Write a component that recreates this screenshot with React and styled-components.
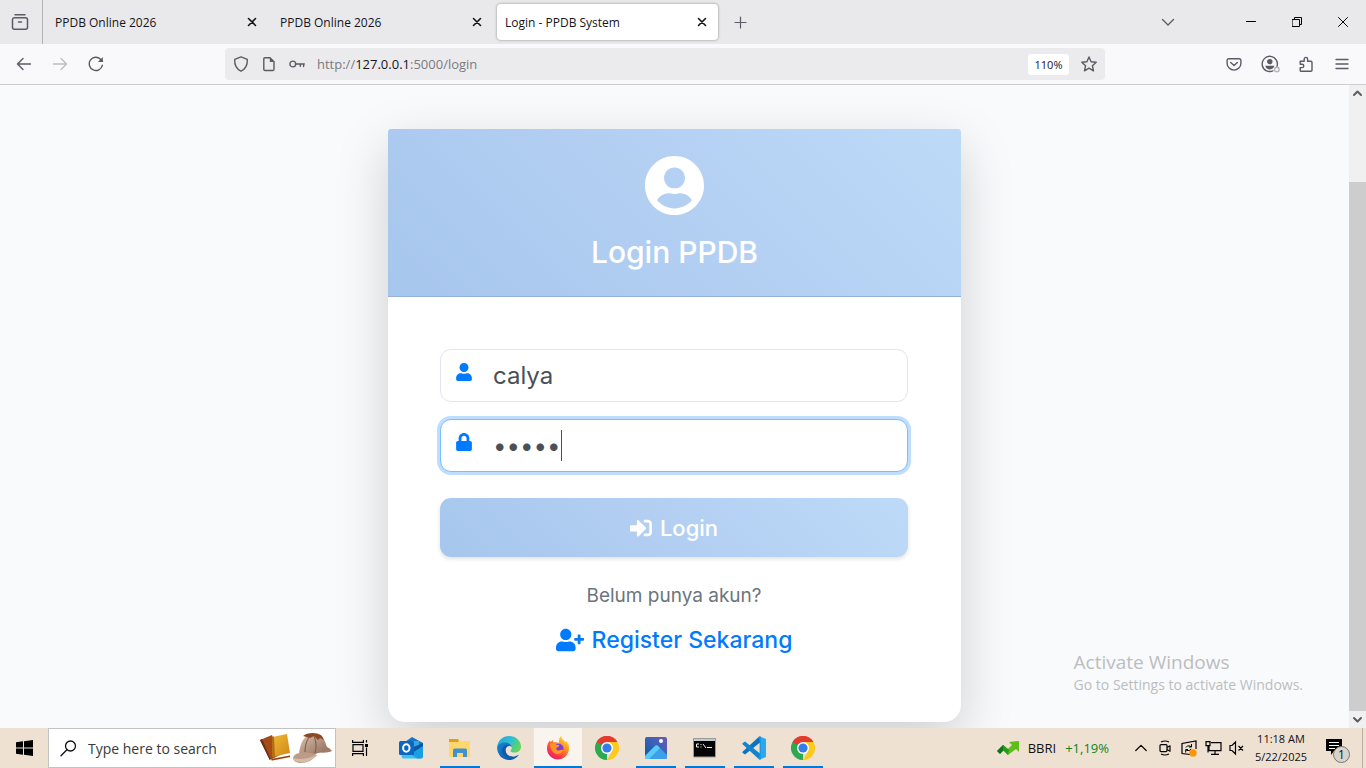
import React from "react";
import styled, { createGlobalStyle, css } from "styled-components";
import { FaUser, FaLock, FaUserCircle, FaSignInAlt, FaUserPlus } from "react-icons/fa";

const Global = createGlobalStyle`
  *, *::before, *::after { box-sizing: border-box; }
  body { margin: 0; font-family: "Open Sans", "Noto Sans", sans-serif; color: #15141a; }
  button, input { font: inherit; color: inherit; }
  button { border: 0; background: none; padding: 0; }
  svg { display: block; }
`;

const Screen = styled.div`
  min-height: 100vh;
  display: flex;
  flex-direction: column;
  overflow: hidden;
`;

/* ---------- browser chrome ---------- */

const TabBar = styled.div`
  display: flex;
  align-items: center;
  height: 44px;
  background: #e9e9eb;
`;

const FirefoxView = styled.button`
  display: grid;
  place-items: center;
  width: 43px;
  height: 44px;
  padding-right: 2px;
  border-right: 1px solid #b4b4b8;
  color: #5b5b66;
`;

const Tabs = styled.div`
  display: flex;
  gap: 4px;
  padding: 0 4px;
`;

const Tab = styled.div`
  display: flex;
  align-items: center;
  justify-content: space-between;
  width: 221px;
  height: 36px;
  padding: 0 11px 0 8px;
  border-radius: 4px;
  font-size: 12px;
  ${(p) =>
    p.$active &&
    css`
      background: #fff;
      box-shadow: 0 0 3px rgba(0, 0, 0, 0.4);
    `}
`;

const IconButton = styled.button`
  display: grid;
  place-items: center;
  width: ${(p) => p.$w || 36}px;
  height: ${(p) => p.$h || 36}px;
  color: ${(p) => p.$color || "#5b5b66"};
`;

const WindowControls = styled.div`
  display: flex;
  align-items: center;
  margin-left: auto;
`;

const TabListSlot = styled.div`
  padding-right: 42px;
`;

const NavBar = styled.div`
  display: grid;
  grid-template-columns: 225px 1fr 261px;
  align-items: center;
  height: 41px;
  background: #f9f9fb;
  border-bottom: 1px solid #ccccd1;
`;

const NavGroup = styled.div`
  display: flex;
  align-items: center;
  ${(p) => (p.$end ? "justify-content: flex-end; padding-right: 6px;" : "padding-left: 6px;")}
`;

const UrlBar = styled.div`
  display: flex;
  align-items: center;
  height: 32px;
  padding: 0 8px;
  gap: 12px;
  border-radius: 4px;
  background: #ebebed;
  color: #5b5b66;
`;

const UrlText = styled.div`
  flex: 1;
  font-size: 13px;
  color: #7b7b80;
  b {
    font-weight: 400;
    color: #15141a;
  }
`;

const ZoomBadge = styled.button`
  width: 41px;
  height: 21px;
  border-radius: 3px;
  background: #fff;
  color: #15141a;
  font-size: 11px;
`;

/* ---------- page ---------- */

const Viewport = styled.div`
  position: relative;
  display: flex;
  flex: 1;
`;

const Page = styled.main`
  flex: 1;
  display: flex;
  justify-content: center;
  align-items: flex-start;
  padding: 44px 16px 6px;
  background: #f9fafc;
  overflow: hidden;
  font-family: Inter, "Open Sans", sans-serif;
`;

const Card = styled.section`
  width: 100%;
  max-width: 573px;
  border-radius: 3px 3px 17px 17px;
  background: #fff;
  box-shadow: 0 18px 53px rgba(0, 0, 0, 0.175);
`;

const gradient = "linear-gradient(45deg, #a7c6ed, #b3d0f3 52%, #bddaf8)";

const CardHeader = styled.header`
  display: flex;
  flex-direction: column;
  align-items: center;
  gap: 17px;
  height: 168px;
  padding-top: 26px;
  border-radius: 3px 3px 0 0;
  border-bottom: 1px solid #94b1d6;
  background: ${gradient};
  color: #fff;
`;

const Title = styled.h1`
  margin: 0;
  font-size: 30px;
  line-height: 38px;
  font-weight: 500;
`;

const Form = styled.form`
  display: flex;
  flex-direction: column;
  padding: 52px 53px 66px 52px;
`;

const Field = styled.label`
  display: flex;
  height: 53px;
  margin-bottom: ${(p) => (p.$focused ? 26 : 17)}px;
  padding: 0 14px;
  border: 1px solid ${(p) => (p.$focused ? "#80bdff" : "#e2e4ee")};
  border-radius: 11px;
  background: #fff;
  box-shadow: ${(p) => (p.$focused ? "0 0 0 3px #bfdeff" : "none")};
  color: #007bff;
`;

const FieldIcon = styled.span`
  width: 38px;
  padding-top: 13px;
`;

const TextInput = styled.input`
  flex: ${(p) => (p.$hug ? "none" : 1)};
  ${(p) => p.$hug && "field-sizing: content;"}
  min-width: 0;
  padding: 0;
  border: 0;
  outline: 0;
  background: transparent;
  color: #495057;
  font-size: 24px;
`;

const Caret = styled.span`
  align-self: center;
  width: 1px;
  height: 31px;
  background: #495057;
`;

const Submit = styled.button`
  display: flex;
  align-items: center;
  justify-content: center;
  gap: 8px;
  height: 59px;
  border-radius: 11px;
  background: ${gradient};
  box-shadow: 0 2px 4px rgba(0, 0, 0, 0.12);
  color: #fff;
  font-size: 22px;
  font-weight: 500;
`;

const Hint = styled.p`
  margin: 25px 0 14px;
  text-align: center;
  font-size: 19px;
  line-height: 28px;
  color: #6c757d;
`;

const Register = styled.a`
  display: flex;
  align-items: center;
  justify-content: center;
  gap: 8px;
  line-height: 32px;
  font-size: 23px;
  font-weight: 500;
  color: #007bff;
  text-decoration: none;
`;

const Scrollbar = styled.div`
  display: flex;
  flex-direction: column;
  width: 17px;
  background: #f0f0f0;
`;

const ScrollThumb = styled.div`
  flex: 529;
  background: #cdcdcd;
`;

const ScrollSpace = styled.div`
  flex: 80;
`;

const Watermark = styled.div`
  position: absolute;
  right: 63px;
  bottom: 32px;
  color: #bcbdbf;
  font-size: 14px;
  line-height: 22px;
  strong {
    display: block;
    font-size: 19px;
    line-height: 24px;
    font-weight: 400;
  }
`;

/* ---------- taskbar ---------- */

const Taskbar = styled.footer`
  display: flex;
  height: 40px;
  background: #efe1d2;
  color: #111;
`;

const SearchBox = styled.label`
  display: flex;
  align-items: center;
  gap: 11px;
  width: 288px;
  padding: 0 3px 0 11px;
  border: 1px solid #c3c3c6;
  background: #fff;
`;

const SearchInput = styled.input`
  flex: 1;
  min-width: 0;
  padding: 0;
  border: 0;
  outline: 0;
  background: transparent;
  font-size: 14px;
  &::placeholder {
    color: #3a3a3a;
    opacity: 1;
  }
`;

const AppList = styled.nav`
  display: flex;
  gap: 1px;
  padding-left: 3px;
`;

const AppButton = styled.button`
  display: grid;
  place-items: center;
  width: 48px;
  height: 40px;
  background: ${(p) => (p.$active ? "#f9f4ee" : "none")};
  background-image: ${(p) => (p.$open || p.$active ? "linear-gradient(#0078d7, #0078d7)" : "none")};
  background-repeat: no-repeat;
  background-position: center bottom;
  background-size: ${(p) => (p.$active ? "48px 2px" : "40px 2px")};
`;

const Tray = styled.div`
  display: flex;
  align-items: center;
  margin-left: auto;
`;

const Stock = styled.button`
  display: flex;
  align-items: center;
  gap: 9px;
  margin-right: 20px;
  font-size: 13px;
  em {
    font-style: normal;
    color: #138313;
  }
`;

const Clock = styled.time`
  width: 64px;
  text-align: center;
  font-size: 11px;
  line-height: 18px;
`;

const Notify = styled.button`
  display: grid;
  place-items: center;
  width: 49px;
  height: 40px;
  padding-top: 6px;
`;

const ShowDesktop = styled.button`
  width: 4px;
  height: 40px;
  border-left: 1px solid #b9aea3;
`;

/* ---------- icons ---------- */

const Line = ({ s = 16, w = 1.4, children, ...rest }) => (
  <svg width={s} height={s} viewBox={`0 0 ${s} ${s}`} fill="none" stroke="currentColor" strokeWidth={w} strokeLinecap="round" strokeLinejoin="round" {...rest}>
    {children}
  </svg>
);

const CloseX = () => (
  <Line s={10} w={1.6}><path d="M1.5 1.5l7 7M8.5 1.5l-7 7" /></Line>
);

const ViewIcon = () => (
  <Line s={18} w={1.5}>
    <path d="M4 1.8h10M3.5 4.7h11a2 2 0 0 1 2 2v7.600a2 2 0 0 1-2 2h-11a2 2 0 0 1-2-2V6.700a2 2 0 0 1 2-2zM7.500 9h3" />
  </Line>
);

const Shield = () => (
  <Line><path d="M8 .9l6.300 2.400c.3 5.400-1.500 9.700-6.300 11.900C3.200 13 1.400 8.700 1.700 3.300z" /></Line>
);

const PageIcon = () => (
  <Line>
    <path d="M4 1.700h5l4 4v7.600a1.200 1.200 0 0 1-1.200 1.200H4a1.200 1.200 0 0 1-1.200-1.200V2.900A1.200 1.200 0 0 1 4 1.700z" />
    <path d="M8.800 1.500v4.600h4.400z" fill="currentColor" stroke="none" />
  </Line>
);

const KeyIcon = () => (
  <Line><circle cx="3.800" cy="8" r="2.900" /><path d="M6.900 8h8.400M11.300 8v2.200M14.600 8v2.600" /></Line>
);

const Star = () => (
  <Line><path d="M8 1l2.100 4.700 5.100.5-3.800 3.500 1.100 5.100L8 12.200l-4.500 2.600 1.100-5.100L.8 6.200l5.100-.5z" /></Line>
);

const Pocket = () => (
  <Line>
    <path d="M2.600 2.700h10.800a1.500 1.500 0 0 1 1.500 1.500v3a6.900 6.900 0 0 1-13.800 0v-3a1.500 1.500 0 0 1 1.500-1.500z" />
    <path d="M4.700 6.500L8 9.600l3.300-3.100" />
  </Line>
);

const Account = () => (
  <Line s={20}>
    <path d="M16.800 12.800A7.600 7.600 0 1 0 12.800 16.900" />
    <circle cx="9.800" cy="7.600" r="2.700" fill="currentColor" stroke="none" />
    <path d="M5.300 11.800h9c-.4 2.600-2.500 3.600-4.500 3.600s-4.100-1-4.500-3.600z" fill="currentColor" stroke="none" />
    <circle cx="16.800" cy="15.500" r="2.300" stroke="#b5b5ba" fill="#f9f9fb" />
  </Line>
);

const Puzzle = () => (
  <Line>
    <path d="M2.200 5.200h4V3.100a1.700 1.700 0 0 1 3.400 0v2.100h3.200a1.200 1.200 0 0 1 1.200 1.200v7.800a1 1 0 0 1-1 1H3.200a1 1 0 0 1-1-1v-2.600h1.900a1.700 1.700 0 0 0 0-3.400H2.200z" />
  </Line>
);

const WinLogo = () => (
  <svg width="17" height="16" viewBox="0 0 17 16" fill="#000">
    <path d="M0 2.300L7 1.300v6.200H0zM8 1.200L17 0v7.500H8zM0 8.500h7v6.200l-7-1zM8 8.500h9V16l-9-1.200z" />
  </svg>
);

const SearchIcon = () => (
  <Line s={17} w={1.3} color="#111"><circle cx="10.500" cy="6" r="5" /><path d="M6.900 9.700L1 15.800" /></Line>
);

const SearchArt = () => (
  <svg width="73" height="32" viewBox="0 0 73 32">
    <defs>
      <linearGradient id="capA" x1="0" y1="0" x2="1" y2="1"><stop offset="0" stopColor="#dcc2ae" /><stop offset="1" stopColor="#8f6b5b" /></linearGradient>
      <linearGradient id="bookA" x1="0" y1="0" x2="1" y2="1"><stop offset="0" stopColor="#efbb35" /><stop offset="1" stopColor="#cf8717" /></linearGradient>
    </defs>
    <path d="M1 8l12-5 8 20-10 5z" fill="#a64a18" />
    <path d="M1 8l2-1 9 20.500-1.300.5z" fill="#702c10" />
    <path d="M11 27.500l20-4v2l-19 3.500z" fill="#f4e4c6" />
    <path d="M13 5l15-3 3 19-18 4z" fill="url(#bookA)" />
    <path d="M13 5l2-.4 1 19.800-3 .6z" fill="#b56d13" />
    <path d="M12 27l19-3.500v1.500L13 28.500z" fill="#963e16" />
    <path d="M59 13c4-1 11 2 14 6-4 2-10 2-15 1z" fill="#a07b68" />
    <path d="M40 22c1-11 5-19 14-20 9-1 13 7 14 15-7 5-18 7-28 5z" fill="url(#capA)" />
    <path d="M54 2c3 6 4 12 2 19M53 2c-5 4-7 11-7 18" fill="none" stroke="#795445" strokeWidth="1" />
    <path d="M44 4c4-4 15-4 19 0l2 4-4-2-2 2-4-4-4 2z" fill="#8d4824" />
    <path d="M34 26c1-4 5-5 8-5 6-1 12 0 16 2-4 5-10 8-16 8-4 0-8-2-8-5z" fill="#bc9b87" />
    <path d="M34 26c7 2 15 1 23-3-3 5-10 8-16 7-3 0-6-1-7-4z" fill="#d6bba8" />
  </svg>
);

const TaskView = () => (
  <svg width="17" height="16" viewBox="0 0 17 16" fill="none" stroke="#000" strokeWidth="1.2">
    <path d="M.6 0v2.400h10.800V0M.6 16v-2.400h10.800V16M1 4.600h10v6.800H1zM14.500 0v2.500M14.500 7.500V16" />
    <path d="M13 4h3v3h-3z" fill="#000" stroke="none" />
  </svg>
);

const Outlook = () => (
  <svg width="24" height="24" viewBox="0 0 24 24">
    <path d="M3 8L13 1l11 6v5H3z" fill="#1576c8" /><path d="M8 5h12v9H8z" fill="#35a5e8" />
    <path d="M24 8v12a2.500 2.500 0 0 1-2.500 2.500H5A2.500 2.500 0 0 1 2.500 20v-3z" fill="#34c6f4" />
    <path d="M24 8v12a2.500 2.500 0 0 1-2.500 2.500H18L10 17z" fill="#1b9de2" />
    <path d="M24 7v3L13 17l-3-4z" fill="#0c56a4" />
    <rect y="5" width="15" height="14" rx="1.500" fill="#0b67c1" />
    <ellipse cx="7.300" cy="12" rx="3.200" ry="3.700" fill="none" stroke="#fff" strokeWidth="2" />
  </svg>
);

const Explorer = () => (
  <svg width="24" height="24" viewBox="0 0 24 24">
    <path d="M1 3h9l1.500 2H22v16H1z" fill="#ffd76a" /><path d="M1 3h9l1 2-1 1H1z" fill="#dca21d" />
    <path d="M5 21v-7a1.500 1.500 0 0 1 1.500-1.500h11A1.500 1.500 0 0 1 19 14v7h-4v-4H9v4z" fill="#3f91d0" />
  </svg>
);

const Edge = () => (
  <svg width="24" height="24" viewBox="0 0 24 24">
    <defs>
      <linearGradient id="ed1" x1="0" y1="0" x2="1" y2=".4"><stop stopColor="#269ede" /><stop offset=".6" stopColor="#2fc1cf" /><stop offset="1" stopColor="#62d45c" /></linearGradient>
      <linearGradient id="ed2" x1="0" y1="0" x2="1" y2="1"><stop stopColor="#1686d4" /><stop offset="1" stopColor="#0b51a0" /></linearGradient>
    </defs>
    <path d="M.2 11C1 4 6 0 12 0c7 0 12 5 12 10.500 0 4-3 6-6.500 6-2.500 0-4-.8-4-1.600 0-.7 1.300-1.200 1.300-3.200C14.800 9.300 12.300 7 9 7 4 7 .5 10 .2 11z" fill="url(#ed1)" />
    <path d="M.1 12C0 8.500 4.500 6 9 6.500c3.500.4 5.500 2.500 5.800 4.500C13 9 9 10 8.500 14c-.5 4 3.500 7.500 9 6.500 2-.4 3.700-1.500 4.500-2-2 3.500-6 5.500-10 5.500C5.500 24 .4 19 .1 12z" fill="url(#ed2)" />
    <path d="M5 13c1-3 4-5 8-4-3 0-4.800 2.500-4.500 5.500.3 3.500 3.500 6.500 8 6.200C10 23 4 19 5 13z" fill="#115aab" />
  </svg>
);

const Firefox = () => (
  <svg width="24" height="24" viewBox="0 0 24 24">
    <defs>
      <linearGradient id="ff1" x1=".9" y1="0" x2=".2" y2="1"><stop stopColor="#fff04a" /><stop offset=".35" stopColor="#ff9c20" /><stop offset=".7" stopColor="#ff4045" /><stop offset="1" stopColor="#e51578" /></linearGradient>
    </defs>
    <path d="M15 0c.5 3 3 4 4.500 6l1-.8C22.500 8 23.300 10 23 13c-.5 6-5.500 10.500-11 10.500S1 19 1 12.500C1 9 2 6.500 4 4.500L4.500 6 7 4l.5 2.500C10 6 12 6.500 13 7c-.5-3 .5-5.500 2-7z" fill="url(#ff1)" />
    <circle cx="12.500" cy="12.700" r="5" fill="#803bdc" />
    <path d="M4 8c2-1.500 5-1 6 .8 1.500-.3 3 0 3.500.7-.5 1.500-2.500 1.500-3 2.500s0 2.500 2 2.500c2.500 0 3-1 5-.5-1 3-4 4.500-6.500 4.200C7 17.700 4 13 4 8z" fill="#ff9523" />
  </svg>
);

const Chrome = () => (
  <svg width="24" height="24" viewBox="0 0 24 24">
    <path d="M12 12L1.600 6A12 12 0 0 1 22.400 6z" fill="#e33b2e" />
    <path d="M12 12V24A12 12 0 0 1 1.600 6z" fill="#2da94f" />
    <path d="M12 12l5.200 3L12 24A12 12 0 0 0 22.400 6H12z" fill="#fdc91c" />
    <path d="M1.600 6l5.200 9L12 12 9 6z" fill="#2da94f" /><path d="M1.600 6A12 12 0 0 1 22.400 6H12l-5 3z" fill="#e33b2e" />
    <circle cx="12" cy="12" r="6" fill="#fff" /><circle cx="12" cy="12" r="4.600" fill="#357cef" />
  </svg>
);

const Photos = () => (
  <svg width="22" height="22" viewBox="0 0 22 22">
    <defs><linearGradient id="ph" x1="0" y1="1" x2="1" y2="0"><stop stopColor="#075aa8" /><stop offset=".55" stopColor="#3b61b7" /><stop offset="1" stopColor="#7059b2" /></linearGradient></defs>
    <rect width="22" height="22" rx="2" fill="url(#ph)" />
    <path d="M0 19L10 9q1.500-1.400 3 0l9 9v2a2 2 0 0 1-2 2H0z" fill="#3d9fe9" /><path d="M0 19L10 9q1.500-1.400 3 0l2 2L4 22H0z" fill="#58c9f8" />
    <circle cx="16" cy="4" r="2" fill="#fff" />
  </svg>
);

const Terminal = () => (
  <svg width="24" height="20" viewBox="0 0 24 20">
    <path d="M.5.5h22v18.500H.5z" fill="#050505" stroke="#9b9b9b" /><path d="M1 1h21v2H1z" fill="#c4c9d0" />
    <path d="M6 6H3.500v3H6M8 6v1M8 8.500v1M10 6l3 4M14 9.500h5" fill="none" stroke="#eee" />
  </svg>
);

const VSCode = () => (
  <svg width="24" height="24" viewBox="0 0 24 24">
    <path d="M17.500.3L24 3v18l-6.500 2.700z" fill="#29a9f1" />
    <path d="M17.500.3L18 6.500 3 18.500.8 17a1 1 0 0 1 0-1.500z" fill="#0874c4" />
    <path d="M17.500 23.700L18 17.500 3 5.500.8 7a1 1 0 0 0 0 1.500z" fill="#1184d0" />
    <path d="M17.500.3L18 6.500v11l-.5 6.200 1 .1V.2z" fill="#1688d5" />
  </svg>
);

const StockIcon = () => (
  <svg width="22" height="14" viewBox="0 0 22 14">
    <path d="M0 10l6-6 5 4 4-4-3-3 10-1v11l-3-3-8 6-5-5-3 4z" fill="#5ebd16" />
    <path d="M0 10l6-6 3 3-6 6z" fill="#12751a" /><path d="M6 4l6 5-1 5-5-5z" fill="#259c1b" />
  </svg>
);

const Camera = () => (
  <Line w={1.2} strokeLinecap="butt"><rect x="3" y="4.600" width="7" height="7" rx="1" /><path d="M10 7.500l3-1.700v5.400l-3-1.700M4 2q4-2 8 0M4 14q4 2 8 0" /></Line>
);

const Update = () => (
  <svg width="18" height="17" viewBox="0 0 18 17" fill="none" stroke="#000" strokeWidth="1.200">
    <path d="M10 14.500l-8-1V3.500L16 1v8" /><path d="M6 7.500q1-2.500 4-1.500l1 .8M11.500 4v3H9M11 8.800q-1 2.500-4 1.700L6 9.800M5.700 12.500v-3H8" strokeWidth="1" />
    <circle cx="13" cy="13" r="3.700" fill="#ff9500" stroke="none" />
  </svg>
);

const Network = () => (
  <svg width="17" height="16" viewBox="0 0 17 16" fill="none" stroke="#000" strokeWidth="1.200">
    <path d="M6 2.600h10v8H4V6M10 11v3M6 14.400h8M1 1.600h4v4H1zM3 5.600v7" />
  </svg>
);

const Volume = () => (
  <svg width="16" height="16" viewBox="0 0 16 16" fill="none" stroke="#000" strokeWidth="1.200">
    <path d="M1 5.500h2L6.500 2v12L3 10.500H1zM9.500 6l4.500 4.500M14 6l-4.500 4.500" />
  </svg>
);

const Message = () => (
  <svg width="26" height="26" viewBox="0 0 26 26">
    <path d="M1 1h16v12H9l-3 4v-4H1z" fill="#000" /><path d="M4 4.500h10M4 7.500h10M4 10.500h6" stroke="#fff" strokeWidth="1.200" />
    <circle cx="16.500" cy="16.500" r="8" fill="#d8d3cd" stroke="#77736f" />
    <text x="16.500" y="21" textAnchor="middle" fontSize="12" fontFamily="Open Sans, sans-serif" fill="#111">1</text>
  </svg>
);

const apps = [
  { name: "Outlook", icon: <Outlook /> },
  { name: "File Explorer", icon: <Explorer />, open: true },
  { name: "Edge", icon: <Edge /> },
  { name: "Firefox", icon: <Firefox />, active: true },
  { name: "Chrome", icon: <Chrome /> },
  { name: "Photos", icon: <Photos />, open: true },
  { name: "Command Prompt", icon: <Terminal />, open: true },
  { name: "Visual Studio Code", icon: <VSCode />, open: true },
  { name: "Chrome window", icon: <Chrome />, open: true },
];

const tabs = ["PPDB Online 2026", "PPDB Online 2026", "Login - PPDB System"];

export default function App() {
  return (
    <Screen>
      <Global />
      <TabBar>
        <FirefoxView aria-label="Firefox View"><ViewIcon /></FirefoxView>
        <Tabs>
          {tabs.map((title, i) => (
            <Tab key={i} $active={i === 2}>
              <span>{title}</span>
              <IconButton $w={10} $h={20} $color="#15141a" aria-label="Close tab"><CloseX /></IconButton>
            </Tab>
          ))}
        </Tabs>
        <IconButton aria-label="New tab"><Line s={13} w={1.2}><path d="M6.500 1v11M1 6.500h11" /></Line></IconButton>
        <WindowControls>
          <TabListSlot>
            <IconButton aria-label="List all tabs"><Line s={14}><path d="M1.500 4.500L7 10l5.500-5.500" /></Line></IconButton>
          </TabListSlot>
          <IconButton $w={46} $color="#000" aria-label="Minimize"><Line s={10} w={1}><path d="M.5 4.500h9" /></Line></IconButton>
          <IconButton $w={46} $color="#000" aria-label="Restore"><Line s={10} w={1}><path d="M.5 2.500h7v7h-7zM2.500 2.500v-2h7v7h-2" /></Line></IconButton>
          <IconButton $w={46} $color="#000" aria-label="Close window"><Line s={10} w={1}><path d="M.5.5l9 9M9.500.5l-9 9" /></Line></IconButton>
        </WindowControls>
      </TabBar>
      <NavBar>
        <NavGroup>
          <IconButton aria-label="Back"><Line><path d="M14.500 8H1.500M7 2.500L1.500 8 7 13.500" /></Line></IconButton>
          <IconButton $color="#bdbdc2" aria-label="Forward"><Line><path d="M1.500 8h13M9 2.500L14.500 8 9 13.500" /></Line></IconButton>
          <IconButton aria-label="Reload"><Line><path d="M14.300 9.300A6.600 6.600 0 1 1 12.500 3.200L14.500 5.200" /><path d="M14.800 1v4.900H9.900z" fill="currentColor" stroke="none" /></Line></IconButton>
        </NavGroup>
        <UrlBar>
          <Shield /><PageIcon /><KeyIcon />
          <UrlText role="textbox" aria-label="Address">http://<b>127.0.0.1</b>:5000/login</UrlText>
          <ZoomBadge>110%</ZoomBadge>
          <Star />
        </UrlBar>
        <NavGroup $end>
          <IconButton aria-label="Pocket"><Pocket /></IconButton>
          <IconButton aria-label="Account"><Account /></IconButton>
          <IconButton aria-label="Extensions"><Puzzle /></IconButton>
          <IconButton aria-label="Menu"><Line s={14} w={1.3}><path d="M1 2.500h12M1 7h12M1 11.500h12" /></Line></IconButton>
        </NavGroup>
      </NavBar>

      <Viewport>
        <Page>
          <Card>
            <CardHeader>
              <FaUserCircle size={61} />
              <Title>Login PPDB</Title>
            </CardHeader>
            <Form onSubmit={(e) => e.preventDefault()}>
              <Field>
                <FieldIcon><FaUser size={18} /></FieldIcon>
                <TextInput aria-label="Username" defaultValue="calya" />
              </Field>
              <Field $focused>
                <FieldIcon><FaLock size={18} /></FieldIcon>
                <TextInput $hug type="password" aria-label="Password" defaultValue="calya" />
                <Caret />
              </Field>
              <Submit><FaSignInAlt size={22} />Login</Submit>
              <Hint>Belum punya akun?</Hint>
              <Register href="#register"><FaUserPlus size={28} />Register Sekarang</Register>
            </Form>
          </Card>
        </Page>
        <Scrollbar>
          <IconButton $w={17} $h={17} aria-label="Scroll up"><Line s={11} w={2}><path d="M2 7l3.500-3.500L9 7" /></Line></IconButton>
          <ScrollSpace />
          <ScrollThumb />
          <IconButton $w={17} $h={17} aria-label="Scroll down"><Line s={11} w={2}><path d="M2 4l3.500 3.500L9 4" /></Line></IconButton>
        </Scrollbar>
        <Watermark><strong>Activate Windows</strong>Go to Settings to activate Windows.</Watermark>
      </Viewport>

      <Taskbar>
        <AppButton aria-label="Start"><WinLogo /></AppButton>
        <SearchBox>
          <SearchIcon />
          <SearchInput aria-label="Search" placeholder="Type here to search" />
          <SearchArt />
        </SearchBox>
        <AppButton aria-label="Task view"><TaskView /></AppButton>
        <AppList>
          {apps.map((a) => (
            <AppButton key={a.name} $open={a.open} $active={a.active} aria-label={a.name}>{a.icon}</AppButton>
          ))}
        </AppList>
        <Tray>
          <Stock><StockIcon /><span>BBRI</span><em>+1,19%</em></Stock>
          <IconButton $w={24} $color="#000" aria-label="Hidden icons"><Line s={12} w={1.2}><path d="M.8 8.500L6 3.300l5.200 5.200" /></Line></IconButton>
          <IconButton $w={24} $color="#000" aria-label="Camera"><Camera /></IconButton>
          <IconButton $w={24} aria-label="Updates"><Update /></IconButton>
          <IconButton $w={24} aria-label="Network"><Network /></IconButton>
          <IconButton $w={24} aria-label="Volume"><Volume /></IconButton>
          <Clock>11:18 AM<br />5/22/2025</Clock>
          <Notify aria-label="Notifications"><Message /></Notify>
          <ShowDesktop aria-label="Show desktop" />
        </Tray>
      </Taskbar>
    </Screen>
  );
}
